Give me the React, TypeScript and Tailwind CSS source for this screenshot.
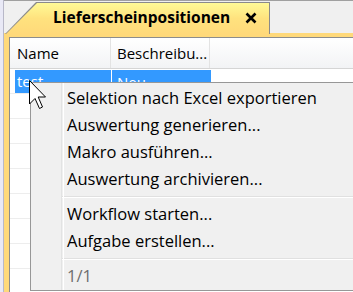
import React from "react";

const menuGroups: { label: string; disabled?: boolean }[][] = [
  [
    { label: "Selektion nach Excel exportieren" },
    { label: "Auswertung generieren..." },
    { label: "Makro ausführen..." },
    { label: "Auswertung archivieren..." },
  ],
  [{ label: "Workflow starten..." }, { label: "Aufgabe erstellen..." }],
  [{ label: "1/1", disabled: true }],
];

const emptyRows = Array.from({ length: 8 });

function Cursor() {
  return (
    <svg
      className="absolute left-[29px] top-[80px]"
      width="19"
      height="30"
      viewBox="0 0 19 30"
    >
      <path
        d="M0.5 0.5 L0.5 24 L6 18.5 L10.5 28.5 L13.5 27 L9.2 17 L16.5 17 Z"
        fill="#fff"
        stroke="#000"
        strokeWidth="1"
        strokeLinejoin="miter"
      />
    </svg>
  );
}

function CloseIcon() {
  return (
    <svg width="12" height="12" viewBox="0 0 12 12" className="mt-[2px]">
      <path d="M1.5 1.5 L10.5 10.5 M10.5 1.5 L1.5 10.5" stroke="#000" strokeWidth="2.6" />
    </svg>
  );
}

function ContextMenu() {
  return (
    <div className="absolute left-[30px] top-[82px] w-[340px] h-[209px] bg-[#f0f0f0] border border-[#979797] pt-[2px] text-[16.5px] text-black">
      {/* icon gutter */}
      <div className="absolute left-[30px] top-0 bottom-0 w-[2px] border-l border-[#e2e3e3] shadow-[1px_0_0_#ffffff]" />
      {menuGroups.map((group, gi) => (
        <div key={gi}>
          {gi > 0 && (
            <div className="ml-[31px] h-[8px] flex items-center">
              <div className="w-full h-[2px] border-t border-[#e0e0e0] border-b border-b-white" />
            </div>
          )}
          {group.map((item) => (
            <div
              key={item.label}
              className={
                item.disabled
                  ? "h-[27px] flex items-center pl-[36px] text-[#6d6d6d]"
                  : "h-[27px] flex items-center pl-[36px]"
              }
            >
              {item.label}
            </div>
          ))}
        </div>
      ))}
    </div>
  );
}

export default function App() {
  return (
    <div
      className="relative w-[353px] h-[292px] overflow-hidden flex bg-[#e9e9f6]"
      style={{ fontFamily: '"Open Sans", "Noto Sans", sans-serif' }}
    >
      {/* left frame */}
      <div className="w-[4px] shrink-0 border-r border-[#b8b8c8]" />

      <div className="flex-1 flex flex-col bg-[#ffd97a]">
        {/* tab strip */}
        <div className="relative h-[33px] shrink-0 bg-[#f0f0f0] border-t border-[#a0a0a0]">
          <div className="absolute left-[1px] top-[1px] w-[265px] h-[32px] bg-[#8a8a8a] [clip-path:polygon(0_100%,31px_0,100%_0,100%_100%)]">
            <div className="absolute left-[1px] top-[1px] right-[1px] bottom-0 bg-gradient-to-b from-[#fffa96] via-[#ffe27e] to-[#ffd97a] [clip-path:polygon(0_100%,31px_0,100%_0,100%_100%)]" />
          </div>
          <div className="absolute left-[49px] top-[5px] flex items-center gap-[15px] text-[15.5px] font-bold text-black leading-[22px]">
            <span>Lieferscheinpositionen</span>
            <CloseIcon />
          </div>
        </div>

        {/* content */}
        <div className="flex-1 pl-[5px] pt-[4px]">
          <div className="h-full bg-white border-l border-t border-[#8c8c8c]">
            {/* header */}
            <div className="h-[31px] flex bg-gradient-to-b from-white to-[#f2f3f5] border-b border-[#d5d5d5] text-[15px] text-black">
              <div className="w-[101px] h-full flex items-center pl-[7px] border-r border-[#e3e3e3]">
                Name
              </div>
              <div className="w-[99px] h-full flex items-center pl-[6px] border-r border-[#e3e3e3]">
                Beschreibu...
              </div>
            </div>
            {/* selected row */}
            <div className="h-[25px] pt-[1px] pl-[5px] flex border-b border-[#ededed] text-[15px] text-white">
              <div className="w-[96px] h-[23px] bg-[#3399ff] pl-[2px] pt-[1px] leading-[20px]">test</div>
              <div className="w-[99px] h-[23px] ml-[1px] bg-[#3399ff] pl-[5px] pt-[2px] leading-[20px]">Neu</div>
            </div>
            {emptyRows.map((_, i) => (
              <div key={i} className="h-[25px] border-b border-[#ededed]" />
            ))}
          </div>
        </div>
      </div>

      <ContextMenu />
      <Cursor />
    </div>
  );
}
